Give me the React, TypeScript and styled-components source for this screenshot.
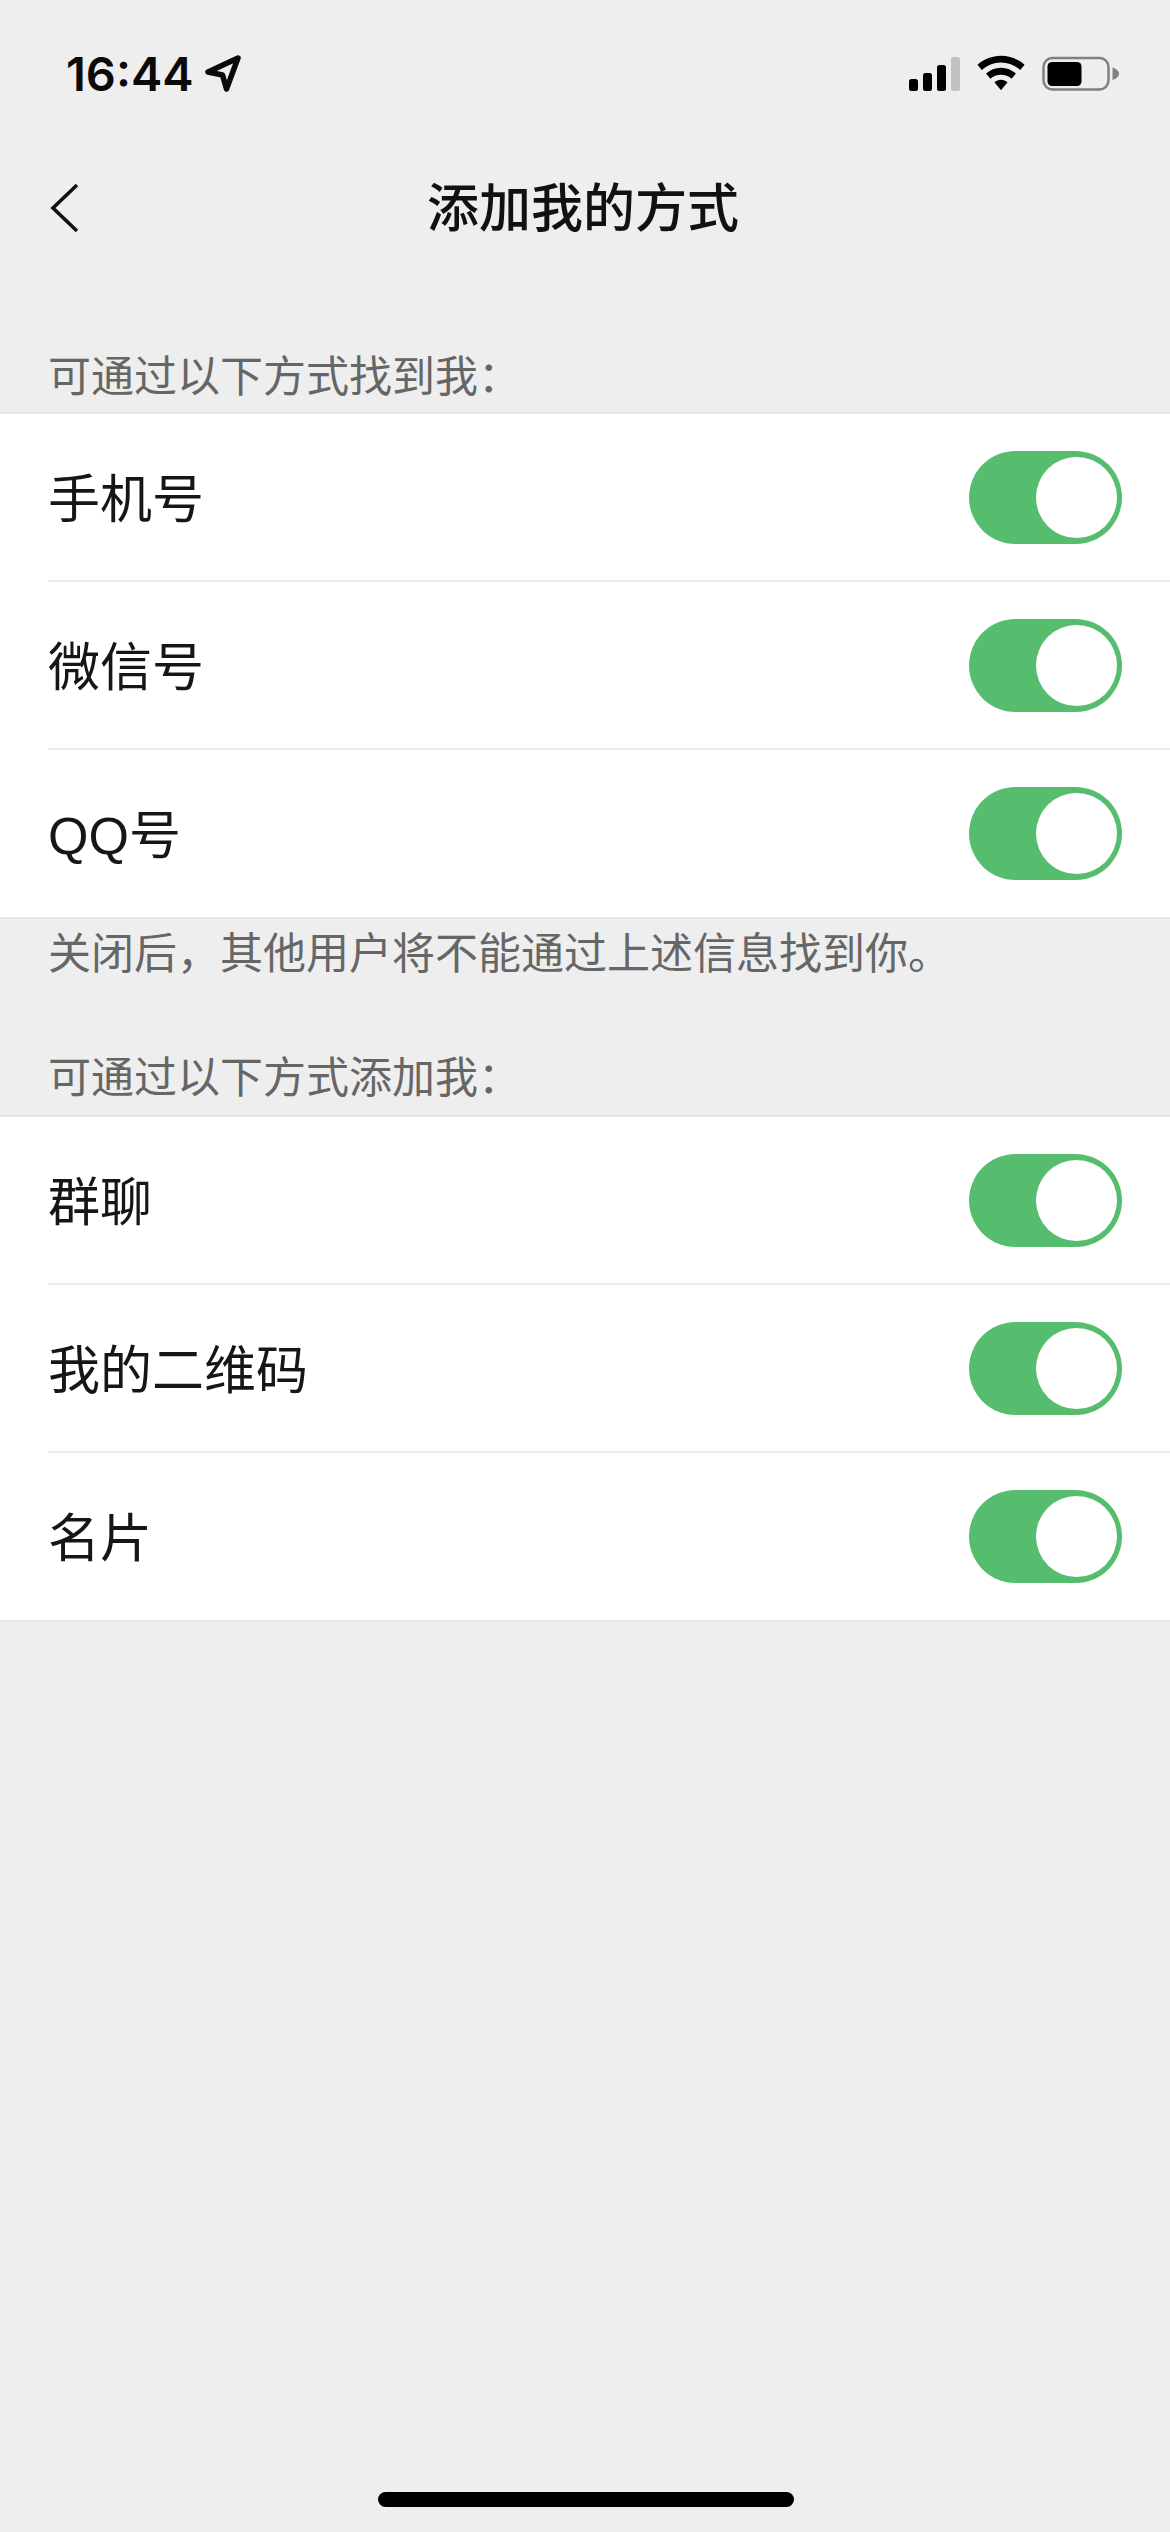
import React from 'react';
import styled, { createGlobalStyle } from 'styled-components';

const GlobalStyle = createGlobalStyle`
  html, body {
    margin: 0;
    padding: 0;
    background: #eeeeee;
  }
  * {
    box-sizing: border-box;
  }
`;

const CJK = `"Noto Sans CJK SC", "Noto Sans", sans-serif`;

const Page = styled.div`
  width: 1170px;
  height: 2532px;
  display: flex;
  flex-direction: column;
  background: #eeeeee;
  font-family: ${CJK};
  overflow: hidden;
`;

const StatusBar = styled.div`
  height: 148px;
  padding: 46px 50px 0 66px;
  display: flex;
  justify-content: space-between;
  align-items: flex-start;
`;

const TimeGroup = styled.div`
  display: flex;
  align-items: center;
  gap: 10px;
`;

const Time = styled.span`
  font-family: Inter, sans-serif;
  font-size: 47px;
  font-weight: 600;
  line-height: 56px;
  color: #0a0a0a;
`;

const StatusIcons = styled.div`
  display: flex;
  align-items: flex-end;
  gap: 17px;
  padding-top: 9px;
`;

const NavBar = styled.div`
  height: 120px;
  padding-left: 50px;
  display: flex;
  align-items: center;
  position: relative;
`;

const NavTitle = styled.h1`
  position: absolute;
  left: 0;
  right: 0;
  top: 0;
  margin: 0;
  padding-right: 4px;
  text-align: center;
  font-size: 52px;
  font-weight: 500;
  line-height: 114px;
  color: #111111;
`;

const SectionLabel = styled.div<{ $top: number; $bottom: number }>`
  margin-top: ${p => p.$top}px;
  padding: 0 0 ${p => p.$bottom}px 48px;
  font-size: 43px;
  line-height: 62px;
  color: #666666;
`;

const Card = styled.div`
  background: #ffffff;
  border-top: 2px solid #e6e6e6;
  border-bottom: 2px solid #e6e6e6;
  display: flex;
  flex-direction: column;
`;

const Row = styled.div`
  height: 168px;
  margin-left: 48px;
  padding-right: 48px;
  display: flex;
  align-items: center;
  justify-content: space-between;
  border-bottom: 2px solid #ececec;
  &:last-child {
    height: 167px;
    border-bottom: none;
  }
`;

const RowLabel = styled.span`
  margin-top: 5px;
  font-family: "Liberation Sans", ${CJK};
  font-size: 52px;
  line-height: 70px;
  color: #161616;
`;

const Toggle = styled.div`
  width: 153px;
  height: 93px;
  padding: 6px 5px 0 0;
  border-radius: 47px;
  background: #57bd6e;
  display: flex;
  justify-content: flex-end;
  flex-shrink: 0;
`;

const Knob = styled.div`
  width: 81px;
  height: 81px;
  border-radius: 50%;
  background: #ffffff;
`;

const Footnote = styled.div`
  padding-left: 48px;
  font-size: 43px;
  line-height: 62px;
  color: #666666;
`;

const Spacer = styled.div`
  flex: 1;
`;

const HomeBar = styled.div`
  align-self: center;
  width: 416px;
  height: 15px;
  margin: 0 0 25px 2px;
  border-radius: 8px;
  background: #000000;
`;

const LocationArrow = () => (
  <svg width="38" height="38" viewBox="0 0 38 38" fill="none">
    <path d="M34 3 L4 17 L18.5 20 L22.5 34 Z" stroke="#0a0a0a" strokeWidth="5.5" strokeLinejoin="round" />
  </svg>
);

const SignalIcon = () => (
  <svg width="51" height="34" viewBox="0 0 51 34">
    <rect x="0" y="22" width="9" height="12" rx="2.5" fill="#000" />
    <rect x="14" y="16" width="9" height="18" rx="2.5" fill="#000" />
    <rect x="28" y="8" width="9" height="26" rx="2.5" fill="#000" />
    <rect x="42" y="0" width="9" height="34" rx="2.5" fill="#c2c2c2" />
  </svg>
);

const WifiIcon = () => (
  <svg width="48" height="36" viewBox="0 0 50 36">
    <path d="M25 0 C15.5 0 7 3.6 0.5 9.5 L5 15 C10.4 10 17.3 7 25 7 C32.7 7 39.6 10 45 15 L49.5 9.5 C43 3.6 34.5 0 25 0 Z" fill="#000" />
    <path d="M25 12.5 C19 12.5 13.6 14.8 9.4 18.6 L14 24 C16.9 21.4 20.7 19.8 25 19.8 C29.3 19.8 33.1 21.4 36 24 L40.6 18.6 C36.4 14.8 31 12.5 25 12.5 Z" fill="#000" />
    <path d="M25 25 C22.4 25 20 26 18.2 27.6 L25 36 L31.8 27.6 C30 26 27.6 25 25 25 Z" fill="#000" />
  </svg>
);

const BatteryIcon = () => (
  <svg width="78" height="36" viewBox="0 0 78 36">
    <rect x="1.5" y="3" width="65" height="31.5" rx="9" fill="none" stroke="#808080" strokeWidth="2.5" />
    <rect x="5.5" y="7" width="34" height="24" rx="4.5" fill="#000" />
    <path d="M70.5 12.5 C74 13.5 77 16 77 18.8 C77 21.5 74 24 70.5 25 Z" fill="#808080" />
  </svg>
);

const BackIcon = () => (
  <svg width="30" height="50" viewBox="0 0 30 50" fill="none">
    <path d="M27 2 L3 25 L27 48" stroke="#111111" strokeWidth="3.6" />
  </svg>
);

const Switch = () => (
  <Toggle>
    <Knob />
  </Toggle>
);

const findRows = ['手机号', '微信号', 'QQ号'];
const addRows = ['群聊', '我的二维码', '名片'];

export default function App() {
  return (
    <Page>
      <GlobalStyle />
      <StatusBar>
        <TimeGroup>
          <Time>16:44</Time>
          <LocationArrow />
        </TimeGroup>
        <StatusIcons>
          <SignalIcon />
          <WifiIcon />
          <BatteryIcon />
        </StatusIcons>
      </StatusBar>
      <NavBar>
        <BackIcon />
        <NavTitle>添加我的方式</NavTitle>
      </NavBar>
      <SectionLabel $top={74} $bottom={8}>可通过以下方式找到我：</SectionLabel>
      <Card>
        {findRows.map(label => (
          <Row key={label}>
            <RowLabel>{label}</RowLabel>
            <Switch />
          </Row>
        ))}
      </Card>
      <Footnote>关闭后，其他用户将不能通过上述信息找到你。</Footnote>
      <SectionLabel $top={62} $bottom={10}>可通过以下方式添加我：</SectionLabel>
      <Card>
        {addRows.map(label => (
          <Row key={label}>
            <RowLabel>{label}</RowLabel>
            <Switch />
          </Row>
        ))}
      </Card>
      <Spacer />
      <HomeBar />
    </Page>
  );
}
